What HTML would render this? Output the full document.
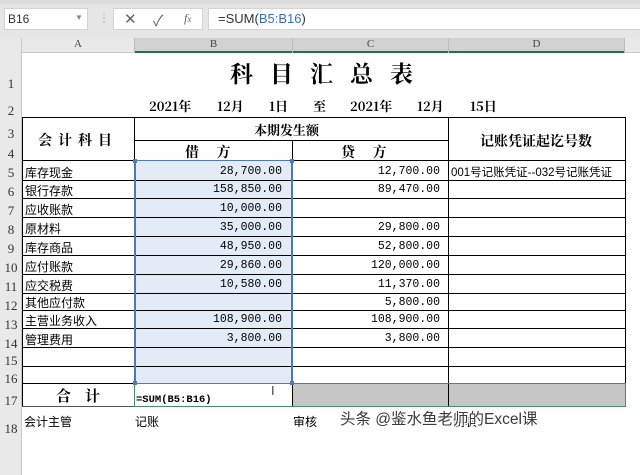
<!DOCTYPE html>
<html><head><meta charset="utf-8"><style>
*{margin:0;padding:0;box-sizing:border-box}
body{width:640px;height:437px;overflow:hidden;background:#fff;position:relative;font-family:"Liberation Sans","Noto Sans CJK SC",sans-serif;font-size:12px;color:#000}
.a{position:absolute}
.hl{position:absolute;height:1px;background:#000}
.vl{position:absolute;width:1px;background:#000}
.rn{position:absolute;left:0;width:22px;text-align:center;font-size:13px;color:#333;font-family:"Liberation Serif",serif}
.t{position:absolute;font-family:"Liberation Sans","Noto Sans CJK SC",sans-serif;font-size:12px;white-space:nowrap}
.n{position:absolute;font-family:"Liberation Mono","Noto Sans CJK SC",monospace;font-size:11.5px;text-align:right;white-space:nowrap}
.s{font-family:"Noto Serif CJK SC","Liberation Serif",serif;font-weight:bold}
</style></head><body>
<div class="a" style="left:0;top:0;width:640px;height:38px;background:#e6e6e6"></div>
<div class="a" style="left:0;top:0;width:640px;height:4px;background:#dcdcdc"></div>
<div class="a" style="left:4px;top:8px;width:84px;height:22px;background:#fff;border:1px solid #d4d4d4"></div>
<div class="t" style="left:8px;top:12px;font-size:12px;color:#333">B16</div>
<div class="a" style="left:75px;top:13px;font-size:8px;color:#888">▼</div>
<div class="a" style="left:98px;top:11px;color:#aaa;font-size:12px">⋮</div>
<div class="a" style="left:113px;top:8px;width:90px;height:22px;background:#fff;border:1px solid #d4d4d4"></div>
<div class="a" style="left:124px;top:10px;color:#666;font-size:15px">✕</div>
<div class="a" style="left:153px;top:10px;color:#666;font-size:15px">✓</div>
<div class="a" style="left:184px;top:11px;color:#666;font-size:12px;font-style:italic;font-family:'Liberation Serif',serif">f<span style="font-size:9px">x</span></div>
<div class="a" style="left:208px;top:8px;width:432px;height:22px;background:#fff;border:1px solid #d4d4d4;border-right:none"></div>
<div class="t" style="left:218px;top:11px;font-size:13px;color:#333">=SUM(<span style="color:#3a6fb5">B5:B16</span>)</div>
<div class="a" style="left:0;top:38px;width:640px;height:15px;background:#e9e9e9;border-bottom:1px solid #c8c8c8"></div>
<div class="a" style="left:134px;top:38px;width:491px;height:15px;background:#d2d2d2;border-bottom:2px solid #217346"></div>
<div class="a" style="left:0;top:38px;width:22px;height:437px;background:#e9e9e9;border-right:1px solid #c8c8c8"></div>
<div class="a" style="left:22px;top:38px;width:112px;height:15px;text-align:center;font-size:11px;font-family:'Liberation Serif',serif;color:#444">A</div>
<div class="a" style="left:134px;top:38px;width:158px;height:15px;text-align:center;font-size:11px;font-family:'Liberation Serif',serif;color:#444;border-left:1px solid #bbb">B</div>
<div class="a" style="left:292px;top:38px;width:156px;height:15px;text-align:center;font-size:11px;font-family:'Liberation Serif',serif;color:#444;border-left:1px solid #bbb">C</div>
<div class="a" style="left:448px;top:38px;width:177px;height:15px;border-left:1px solid #bbb;border-right:1px solid #bbb"></div>
<div class="a" style="left:448px;top:38px;width:177px;text-align:center;font-size:11px;font-family:'Liberation Serif',serif;color:#444">D</div>
<div class="a" style="left:135px;top:161px;width:157px;height:222px;background:#e3ebf6"></div>
<div class="a" style="left:292px;top:384px;width:333px;height:22px;background:#c6c6c6"></div>
<div class="rn" style="top:76px">1</div>
<div class="rn" style="top:103px">2</div>
<div class="rn" style="top:126px">3</div>
<div class="rn" style="top:146px">4</div>
<div class="rn" style="top:165px">5</div>
<div class="rn" style="top:184px">6</div>
<div class="rn" style="top:203px">7</div>
<div class="rn" style="top:222px">8</div>
<div class="rn" style="top:241px">9</div>
<div class="rn" style="top:260px">10</div>
<div class="rn" style="top:279px">11</div>
<div class="rn" style="top:298px">12</div>
<div class="rn" style="top:317px">13</div>
<div class="rn" style="top:336px">14</div>
<div class="rn" style="top:353px">15</div>
<div class="rn" style="top:371px">16</div>
<div class="rn" style="top:393px">17</div>
<div class="rn" style="top:421px">18</div>
<div class="t s" style="left:230px;top:56px;font-size:23px;letter-spacing:17px">科目汇总表</div>
<div class="t s" style="left:149px;top:96px;font-size:13px">2021年</div>
<div class="t s" style="left:217px;top:96px;font-size:13px">12月</div>
<div class="t s" style="left:269px;top:96px;font-size:13px">1日</div>
<div class="t s" style="left:313px;top:96px;font-size:13px">至</div>
<div class="t s" style="left:350px;top:96px;font-size:13px">2021年</div>
<div class="t s" style="left:417px;top:96px;font-size:13px">12月</div>
<div class="t s" style="left:470px;top:96px;font-size:13px">15日</div>
<div class="hl" style="left:22px;top:117px;width:604px"></div>
<div class="hl" style="left:134px;top:140px;width:314px"></div>
<div class="hl" style="left:22px;top:160px;width:604px"></div>
<div class="hl" style="left:22px;top:180px;width:604px"></div>
<div class="hl" style="left:22px;top:198px;width:604px"></div>
<div class="hl" style="left:22px;top:217px;width:604px"></div>
<div class="hl" style="left:22px;top:236px;width:604px"></div>
<div class="hl" style="left:22px;top:255px;width:604px"></div>
<div class="hl" style="left:22px;top:274px;width:604px"></div>
<div class="hl" style="left:22px;top:293px;width:604px"></div>
<div class="hl" style="left:22px;top:310px;width:604px"></div>
<div class="hl" style="left:22px;top:328px;width:604px"></div>
<div class="hl" style="left:22px;top:347px;width:604px"></div>
<div class="hl" style="left:22px;top:366px;width:604px"></div>
<div class="hl" style="left:22px;top:383px;width:604px"></div>
<div class="hl" style="left:22px;top:406px;width:604px;background:#555"></div>
<div class="vl" style="left:22px;top:117px;height:289px"></div>
<div class="vl" style="left:134px;top:117px;height:289px"></div>
<div class="vl" style="left:292px;top:140px;height:266px"></div>
<div class="vl" style="left:448px;top:117px;height:289px"></div>
<div class="vl" style="left:625px;top:117px;height:289px"></div>
<div class="a" style="left:134px;top:160px;width:159px;height:224px;border:2px solid #4f79b5;border-top:1px solid #4f79b5;border-bottom:1px solid #4f79b5"></div>
<div class="a" style="left:133px;top:159px;width:4px;height:4px;background:#4f79b5"></div>
<div class="a" style="left:290px;top:159px;width:4px;height:4px;background:#4f79b5"></div>
<div class="a" style="left:133px;top:381px;width:4px;height:4px;background:#4f79b5"></div>
<div class="a" style="left:290px;top:381px;width:4px;height:4px;background:#4f79b5"></div>
<div class="a" style="left:134px;top:383px;width:492px;height:24px;border:1px solid #4d8a66"></div>
<div class="t s" style="left:38px;top:130px;font-size:14px;letter-spacing:6px">会计科目</div>
<div class="t s" style="left:254px;top:120px;font-size:13px">本期发生额</div>
<div class="t s" style="left:185px;top:142px;font-size:14px">借&nbsp;&nbsp;&nbsp;&nbsp;&nbsp;方</div>
<div class="t s" style="left:341px;top:142px;font-size:14px">贷&nbsp;&nbsp;&nbsp;&nbsp;&nbsp;方</div>
<div class="t s" style="left:480px;top:131px;font-size:14px">记账凭证起讫号数</div>
<div class="t" style="left:25px;top:164px">库存现金</div>
<div class="t" style="left:25px;top:182px">银行存款</div>
<div class="t" style="left:25px;top:201px">应收账款</div>
<div class="t" style="left:25px;top:220px">原材料</div>
<div class="t" style="left:25px;top:239px">库存商品</div>
<div class="t" style="left:25px;top:258px">应付账款</div>
<div class="t" style="left:25px;top:277px">应交税费</div>
<div class="t" style="left:25px;top:294px">其他应付款</div>
<div class="t" style="left:25px;top:312px">主营业务收入</div>
<div class="t" style="left:25px;top:331px">管理费用</div>
<div class="n" style="right:358px;top:165px">28,700.00</div>
<div class="n" style="right:358px;top:183px">158,850.00</div>
<div class="n" style="right:358px;top:202px">10,000.00</div>
<div class="n" style="right:358px;top:221px">35,000.00</div>
<div class="n" style="right:358px;top:240px">48,950.00</div>
<div class="n" style="right:358px;top:259px">29,860.00</div>
<div class="n" style="right:358px;top:278px">10,580.00</div>
<div class="n" style="right:358px;top:313px">108,900.00</div>
<div class="n" style="right:358px;top:332px">3,800.00</div>
<div class="n" style="right:200px;top:165px">12,700.00</div>
<div class="n" style="right:200px;top:183px">89,470.00</div>
<div class="n" style="right:200px;top:221px">29,800.00</div>
<div class="n" style="right:200px;top:240px">52,800.00</div>
<div class="n" style="right:200px;top:259px">120,000.00</div>
<div class="n" style="right:200px;top:278px">11,370.00</div>
<div class="n" style="right:200px;top:296px">5,800.00</div>
<div class="n" style="right:200px;top:313px">108,900.00</div>
<div class="n" style="right:200px;top:332px">3,800.00</div>
<div class="t" style="left:451px;top:164px;font-size:11.5px">001号记账凭证--032号记账凭证</div>
<div class="t s" style="left:56px;top:385px;font-size:15px;letter-spacing:14px">合计</div>
<div class="t" style="left:136px;top:394px;font-family:'Liberation Mono',monospace;font-weight:bold;font-size:10.5px">=SUM(B5:B16)</div>
<div class="a" style="left:271px;top:383px;font-size:13px;color:#444">I</div>
<div class="t" style="left:24px;top:413px">会计主管</div>
<div class="t" style="left:135px;top:413px">记账</div>
<div class="t" style="left:293px;top:413px">审核</div>
<div class="t" style="left:453px;top:413px">制表</div>
<div class="t" style="left:340px;top:407px;font-size:15.5px;color:#3a3a3a;text-shadow:0 0 2px #fff,0 0 1px #fff,1px 1px 0 #fff,-1px -1px 0 #fff">头条 @鉴水鱼老师的Excel课</div>
</body></html>
